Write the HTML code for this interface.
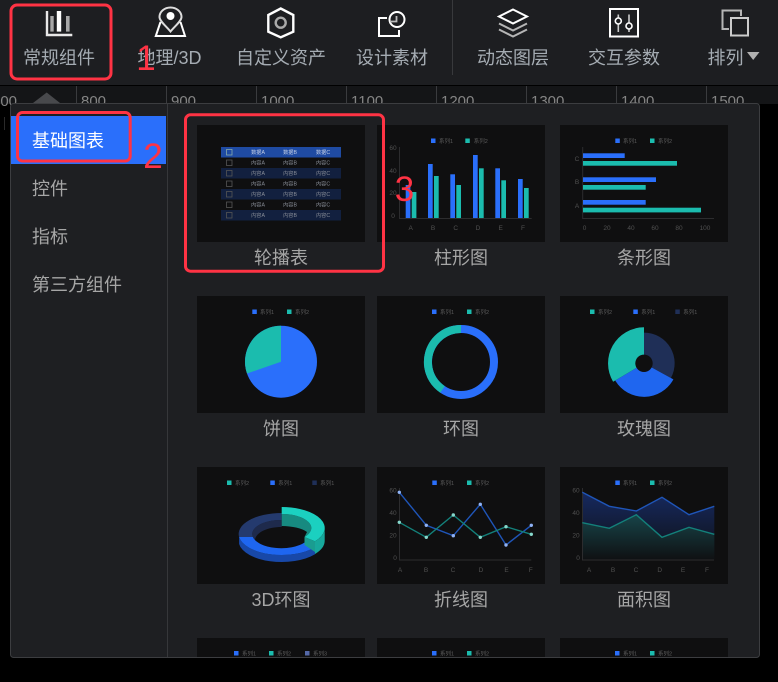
<!DOCTYPE html>
<html lang="zh"><head><meta charset="utf-8"><title>组件面板</title>
<style>
html,body{margin:0;padding:0;background:#000;width:778px;height:682px;overflow:hidden}
svg{display:block;position:absolute;left:0;top:0}
text{font-family:"Liberation Sans","Noto Sans CJK SC",sans-serif}
.t{font-size:18px;fill:#a5acb3;text-anchor:middle}
.l{font-size:18px;fill:#a6a6a6;text-anchor:middle}
.m{font-size:18px;fill:#a6a6a6}
.r{font-size:15px;fill:#858585}
.g{font-size:5.5px;fill:#5c5c5c}
.a{font-size:6.5px;fill:#505050;text-anchor:middle}
.c{font-size:5.2px;fill:#8a8f99;text-anchor:middle}
.n{font-size:35px;fill:#ff3344;text-anchor:middle}
.ln{fill:none;stroke:#fff;stroke-width:2}
.gr{fill:none;stroke:#b5b5b5;stroke-width:2}
.cb{fill:none;stroke:#555;stroke-width:.8}
</style></head><body>
<svg width="778" height="682" viewBox="0 0 778 682">
<defs>
<linearGradient id="ab" x1="0" y1="0" x2="0" y2="1"><stop offset="0" stop-color="#16295f"/><stop offset="1" stop-color="#0f1012"/></linearGradient>
<linearGradient id="at" x1="0" y1="0" x2="0" y2="1"><stop offset="0" stop-color="#174449"/><stop offset="1" stop-color="#0f1012"/></linearGradient>
</defs>
<rect width="778" height="682" fill="#000"/>
<rect width="778" height="85" fill="#1d1e21"/>
<rect x="452" y="0" width="1" height="75" fill="#38393c"/>
<rect y="86" width="778" height="18" fill="#141517"/>
<g fill="#3a3b3e"><rect x="76" y="86" width="1" height="18"/><rect x="166" y="86" width="1" height="18"/><rect x="256" y="86" width="1" height="18"/><rect x="346" y="86" width="1" height="18"/><rect x="436" y="86" width="1" height="18"/><rect x="526" y="86" width="1" height="18"/><rect x="616" y="86" width="1" height="18"/><rect x="706" y="86" width="1" height="18"/></g>
<text class="r" x="-8" y="106">700</text><text class="r" x="81" y="106">800</text><text class="r" x="171" y="106">900</text><text class="r" x="261" y="106">1000</text><text class="r" x="351" y="106">1100</text><text class="r" x="441" y="106">1200</text><text class="r" x="531" y="106">1300</text><text class="r" x="621" y="106">1400</text><text class="r" x="711" y="106">1500</text>
<polygon points="33,103 46.7,92.5 60,103" fill="#48494c"/>
<rect x="4" y="117" width="1" height="13" fill="#2a2a2a"/>
<rect x="10.5" y="103.5" width="749" height="554" rx="3" fill="#1e1f22" stroke="#3c3d40"/>
<rect x="167" y="104" width="1" height="553" fill="#36373a"/>
<rect x="11" y="116" width="155" height="48" fill="#2a6ffb"/>
<text class="m" x="32" y="147" style="fill:#fff">基础图表</text>
<text class="m" x="32" y="195">控件</text>
<text class="m" x="32" y="243">指标</text>
<text class="m" x="32" y="291">第三方组件</text>

<!-- toolbar icons -->
<path d="M47 11V35H72.3" fill="none" stroke="#e8e8e8" stroke-width="2.4"/>
<rect x="50.3" y="16" width="3.4" height="15.6" fill="#a8a8a8"/><rect x="56.8" y="11" width="4.4" height="20.6" fill="#fff"/><rect x="66" y="16" width="3.6" height="15.6" fill="#a8a8a8"/>
<path d="M170.5 31.5C166 26 159.500 21 159.500 17A11 9.500 0 0 1 181.500 17C181.500 21 175 26 170.500 31.500Z" fill="none" stroke="#ddd" stroke-width="2"/>
<path class="ln" d="M160.500 22L155.800 36H185L180.500 22"/>
<circle cx="170.500" cy="16" r="4" fill="#fff"/>
<path d="M280.700 8.500L293.300 15V31.700L280.700 37.300L268.300 31.700V15Z" fill="none" stroke="#fff" stroke-width="2.400"/>
<circle cx="280.700" cy="22.700" r="5" fill="none" stroke="#aaa" stroke-width="2.400"/>
<path class="ln" d="M387 18H379V36H399V30"/>
<circle cx="397" cy="19.500" r="7.500" class="ln"/>
<path d="M390 21.500H396.500V16" fill="none" stroke="#bbb" stroke-width="1.800"/>
<path class="ln" d="M513 9.500L527 16.500L513 23.500L499 16.500Z"/>
<path class="gr" d="M499 23.500L513 30.500L527 23.500"/>
<path class="gr" d="M499 29.500L513 36.500L527 29.500"/>
<rect x="610" y="9" width="28" height="27.500" class="ln"/>
<path d="M618.300 14.500V32M629 14.500V32" stroke="#ccc" stroke-width="1.600"/>
<circle cx="618.300" cy="21" r="3" fill="#1d1e21" stroke="#fff" stroke-width="1.600"/>
<circle cx="629" cy="26" r="3" fill="#1d1e21" stroke="#fff" stroke-width="1.600"/>
<path class="gr" d="M741 16V10.500H722.500V29H729"/>
<rect x="731" y="18" width="17" height="17.500" class="ln" style="stroke:#ccc"/>
<polygon points="747,52 759.500,52 753.200,60" fill="#b0b0b0"/>

<text class="t" x="59" y="64">常规组件</text>
<text class="t" x="169.500" y="64">地理/3D</text>
<text class="t" x="281" y="64">自定义资产</text>
<text class="t" x="392" y="64">设计素材</text>
<text class="t" x="513" y="64">动态图层</text>
<text class="t" x="624" y="64">交互参数</text>
<text class="t" x="725.500" y="64">排列</text>

<!-- thumbs -->
<g fill="#0f0f10">
<rect x="197" y="125" width="168" height="117"/><rect x="377" y="125" width="168" height="117"/><rect x="560" y="125" width="168" height="117"/>
<rect x="197" y="296" width="168" height="117"/><rect x="377" y="296" width="168" height="117"/><rect x="560" y="296" width="168" height="117"/>
<rect x="197" y="467" width="168" height="117"/><rect x="377" y="467" width="168" height="117"/><rect x="560" y="467" width="168" height="117"/>
<rect x="197" y="638" width="168" height="19"/><rect x="377" y="638" width="168" height="19"/><rect x="560" y="638" width="168" height="19"/>
</g>
<text class="l" x="281" y="264">轮播表</text><text class="l" x="461" y="264">柱形图</text><text class="l" x="644" y="264">条形图</text>
<text class="l" x="281" y="435">饼图</text><text class="l" x="461" y="435">环图</text><text class="l" x="644" y="435">玫瑰图</text>
<text class="l" x="281" y="606">3D环图</text><text class="l" x="461" y="606">折线图</text><text class="l" x="644" y="606">面积图</text>

<!-- table -->
<rect x="221" y="147" width="120" height="10.500" fill="#1f4ba3"/>
<g fill="#12203f"><rect x="221" y="168" width="120" height="10.500"/><rect x="221" y="189" width="120" height="10.500"/><rect x="221" y="210" width="120" height="10.500"/></g>
<rect x="226.500" y="149.500" width="5.500" height="5.500" class="cb" style="stroke:#8aa"/><rect x="226.500" y="160" width="5.500" height="5.500" class="cb"/><rect x="226.500" y="170.500" width="5.500" height="5.500" class="cb"/><rect x="226.500" y="181" width="5.500" height="5.500" class="cb"/><rect x="226.500" y="191.500" width="5.500" height="5.500" class="cb"/><rect x="226.500" y="202" width="5.500" height="5.500" class="cb"/><rect x="226.500" y="212.500" width="5.500" height="5.500" class="cb"/>
<text class="c" x="258" y="154" style="fill:#c4cfe6">数据A</text><text class="c" x="290" y="154" style="fill:#c4cfe6">数据B</text><text class="c" x="323" y="154" style="fill:#c4cfe6">数据C</text>
<text class="c" x="258" y="164.500">内容A</text><text class="c" x="290" y="164.500">内容B</text><text class="c" x="323" y="164.500">内容C</text>
<text class="c" x="258" y="175">内容A</text><text class="c" x="290" y="175">内容B</text><text class="c" x="323" y="175">内容C</text>
<text class="c" x="258" y="185.500">内容A</text><text class="c" x="290" y="185.500">内容B</text><text class="c" x="323" y="185.500">内容C</text>
<text class="c" x="258" y="196">内容A</text><text class="c" x="290" y="196">内容B</text><text class="c" x="323" y="196">内容C</text>
<text class="c" x="258" y="206.500">内容A</text><text class="c" x="290" y="206.500">内容B</text><text class="c" x="323" y="206.500">内容C</text>
<text class="c" x="258" y="217">内容A</text><text class="c" x="290" y="217">内容B</text><text class="c" x="323" y="217">内容C</text>

<!-- bar chart -->
<rect x="431" y="138.500" width="4.500" height="4.500" fill="#2a6ffb"/><text class="g" x="439" y="143">系列1</text>
<rect x="465.300" y="138.500" width="4.500" height="4.500" fill="#1bbcae"/><text class="g" x="473.700" y="143">系列2</text>
<path d="M399.500 147V218.500H531.700" fill="none" stroke="#2c2c2e"/>
<text class="a" x="393" y="150">60</text><text class="a" x="393" y="173">40</text><text class="a" x="393" y="195">20</text><text class="a" x="393" y="218">0</text>
<text class="a" x="410.700" y="230">A</text><text class="a" x="433" y="230">B</text><text class="a" x="455.700" y="230">C</text><text class="a" x="478" y="230">D</text><text class="a" x="500.700" y="230">E</text><text class="a" x="523" y="230">F</text>
<g fill="#2a6ffb"><rect x="405.700" y="185" width="4.700" height="33"/><rect x="428" y="164" width="4.700" height="54"/><rect x="450.300" y="174.300" width="4.700" height="43.700"/><rect x="473" y="155" width="4.700" height="63"/><rect x="495.300" y="168.300" width="4.700" height="49.700"/><rect x="518" y="179" width="4.700" height="39"/></g>
<g fill="#1bbcae"><rect x="411.700" y="192" width="4.700" height="26"/><rect x="434" y="176" width="4.700" height="42"/><rect x="456.300" y="185" width="4.700" height="33"/><rect x="479" y="168.300" width="4.700" height="49.700"/><rect x="501.300" y="180.300" width="4.700" height="37.700"/><rect x="524" y="188" width="4.700" height="30"/></g>

<!-- hbar -->
<rect x="615.300" y="138.500" width="4.500" height="4.500" fill="#2a6ffb"/><text class="g" x="623" y="143">系列1</text>
<rect x="650" y="138.500" width="4.500" height="4.500" fill="#1bbcae"/><text class="g" x="658" y="143">系列2</text>
<path d="M582.700 147V218.500H714" fill="none" stroke="#2c2c2e"/>
<text class="a" x="577" y="161">C</text><text class="a" x="577" y="184">B</text><text class="a" x="577" y="208">A</text>
<text class="a" x="584.600" y="230">0</text><text class="a" x="607" y="230">20</text><text class="a" x="631" y="230">40</text><text class="a" x="655" y="230">60</text><text class="a" x="679" y="230">80</text><text class="a" x="705" y="230">100</text>
<g fill="#2a6ffb"><rect x="583" y="153.300" width="41.700" height="4.700"/><rect x="583" y="177.300" width="73" height="4.700"/><rect x="583" y="200" width="62.700" height="4.700"/></g>
<g fill="#1bbcae"><rect x="583" y="161" width="94" height="4.700"/><rect x="583" y="185" width="62.700" height="4.700"/><rect x="583" y="207.700" width="118" height="4.700"/></g>

<!-- pie -->
<rect x="252.300" y="309.500" width="4.500" height="4.500" fill="#2a6ffb"/><text class="g" x="260" y="314">系列1</text>
<rect x="287" y="309.500" width="4.500" height="4.500" fill="#1bbcae"/><text class="g" x="295" y="314">系列2</text>
<circle cx="281" cy="361.700" r="36" fill="#2a6ffb"/>
<path d="M281 361.700V325.700A36 36 0 0 0 247 373.500Z" fill="#1bbcae"/>

<!-- donut -->
<rect x="432" y="309.500" width="4.500" height="4.500" fill="#2a6ffb"/><text class="g" x="440" y="314">系列1</text>
<rect x="467" y="309.500" width="4.500" height="4.500" fill="#1bbcae"/><text class="g" x="475" y="314">系列2</text>
<circle cx="461" cy="362" r="33" fill="none" stroke="#2a6ffb" stroke-width="8"/>
<path d="M461 329A33 33 0 0 0 442.500 389.400" fill="none" stroke="#1bbcae" stroke-width="8"/>

<!-- rose -->
<rect x="590" y="309.500" width="4.500" height="4.500" fill="#1bbcae"/><text class="g" x="598" y="314">系列2</text>
<rect x="633.300" y="309.500" width="4.500" height="4.500" fill="#2a6ffb"/><text class="g" x="641.300" y="314">系列1</text>
<rect x="675.300" y="309.500" width="4.500" height="4.500" fill="#1f2f57"/><text class="g" x="683.300" y="314">系列1</text>
<path d="M644 363.300V332.600A30.700 30.700 0 0 1 670.900 378Z" fill="#1f2f57"/>
<path d="M644 363.300L615.200 380.500A33.500 33.500 0 0 0 673.400 379.400Z" fill="#1f66ef"/>
<path d="M644 363.300V327.300A36 36 0 0 0 613.100 381.700Z" fill="#1bbcae"/>
<circle cx="644" cy="363.300" r="8.700" fill="#0f0f10"/>

<!-- 3d ring -->
<rect x="227" y="480.500" width="4.500" height="4.500" fill="#1bbcae"/><text class="g" x="235" y="485">系列2</text>
<rect x="270.300" y="480.500" width="4.500" height="4.500" fill="#2a6ffb"/><text class="g" x="278.300" y="485">系列1</text>
<rect x="312.300" y="480.500" width="4.500" height="4.500" fill="#1f2f57"/><text class="g" x="320.300" y="485">系列1</text>
<path d="M252.900 537A29 14 0 0 1 281.700 520V527C268 527 256 532 255 540Z" fill="#1e2a4c"/>
<path d="M281.700 513A43 21 0 0 0 239.100 537L252.900 537A29 14 0 0 1 281.700 520Z" fill="#243a6e"/>
<path d="M239.100 537V544A43 21 0 0 0 315 554.300V547.300A43 21 0 0 1 239.100 537Z" fill="#1848a8"/>
<path d="M239.100 537A43 21 0 0 0 315 547.300L305 542.300A29 14 0 0 1 252.900 537Z" fill="#1e66f0"/>
<path d="M281.700 514A29 14 0 0 1 304.500 537L307 532A29 11 0 0 0 281.700 526Z" fill="#178a80"/>
<path d="M304.500 537L315 541.300V552L304.500 545Z" fill="#1a9c90"/>
<path d="M324.700 528V541A43 21 0 0 1 315 554V541.300A43 21 0 0 0 324.700 528Z" fill="#17a89c"/>
<path d="M281.700 507A43 21 0 0 1 315 541.300L304.500 537A29 14 0 0 0 281.700 514Z" fill="#1bd0c0"/>

<!-- line -->
<rect x="432.300" y="480.500" width="4.500" height="4.500" fill="#2a6ffb"/><text class="g" x="440" y="485">系列1</text>
<rect x="467" y="480.500" width="4.500" height="4.500" fill="#1bbcae"/><text class="g" x="475" y="485">系列2</text>
<path d="M399.500 488V560H531.300" fill="none" stroke="#2c2c2e"/>
<text class="a" x="393" y="492.500">60</text><text class="a" x="393" y="515">40</text><text class="a" x="393" y="537.500">20</text><text class="a" x="395" y="560">0</text>
<text class="a" x="400" y="572">A</text><text class="a" x="426" y="572">B</text><text class="a" x="453" y="572">C</text><text class="a" x="481" y="572">D</text><text class="a" x="506.500" y="572">E</text><text class="a" x="530.700" y="572">F</text>
<polyline points="399.300,492.300 426.300,525.300 453.300,535.700 480.300,504.300 506,545 531.300,525.300" fill="none" stroke="#1f55b8" stroke-width="1.400"/>
<polyline points="399.300,522.300 426.300,537.300 453.300,515 480.300,537.300 506,526.700 531.300,534.300" fill="none" stroke="#13807a" stroke-width="1.400"/>
<g fill="#8fb2f5"><circle cx="399.300" cy="492.300" r="1.700"/><circle cx="426.300" cy="525.300" r="1.700"/><circle cx="453.300" cy="535.700" r="1.700"/><circle cx="480.300" cy="504.300" r="1.700"/><circle cx="506" cy="545" r="1.700"/><circle cx="531.300" cy="525.300" r="1.700"/></g>
<g fill="#86d8cc"><circle cx="399.300" cy="522.300" r="1.700"/><circle cx="426.300" cy="537.300" r="1.700"/><circle cx="453.300" cy="515" r="1.700"/><circle cx="480.300" cy="537.300" r="1.700"/><circle cx="506" cy="526.700" r="1.700"/><circle cx="531.300" cy="534.300" r="1.700"/></g>

<!-- area -->
<rect x="615.300" y="480.500" width="4.500" height="4.500" fill="#2a6ffb"/><text class="g" x="623" y="485">系列1</text>
<rect x="650" y="480.500" width="4.500" height="4.500" fill="#1bbcae"/><text class="g" x="658" y="485">系列2</text>
<polygon points="582.300,492.300 609.300,506.300 636.300,511 662,497.300 689,514.700 714.300,506.300 714.300,560 582.300,560" fill="url(#ab)"/>
<polygon points="582.300,522.700 609.300,528.300 636.300,514.700 662,537.300 689,527.300 714.300,534.300 714.300,560 582.300,560" fill="url(#at)"/>
<path d="M582.500 488V560H714" fill="none" stroke="#2c2c2e"/>
<polyline points="582.300,492.300 609.300,506.300 636.300,511 662,497.300 689,514.700 714.300,506.300" fill="none" stroke="#1f55b8" stroke-width="1.400"/>
<polyline points="582.300,522.700 609.300,528.300 636.300,514.700 662,537.300 689,527.300 714.300,534.300" fill="none" stroke="#13807a" stroke-width="1.400"/>
<text class="a" x="576" y="492.500">60</text><text class="a" x="576" y="515">40</text><text class="a" x="576" y="537.500">20</text><text class="a" x="578" y="560">0</text>
<text class="a" x="589" y="572">A</text><text class="a" x="613" y="572">B</text><text class="a" x="636" y="572">C</text><text class="a" x="659.700" y="572">D</text><text class="a" x="683" y="572">E</text><text class="a" x="707" y="572">F</text>

<!-- bottom row legends -->
<rect x="234" y="651" width="4.500" height="4.500" fill="#2a6ffb"/><text class="g" x="242" y="655.500">系列1</text>
<rect x="269" y="651" width="4.500" height="4.500" fill="#1bbcae"/><text class="g" x="277" y="655.500">系列2</text>
<rect x="305" y="651" width="4.500" height="4.500" fill="#5468a8"/><text class="g" x="313" y="655.500">系列3</text>
<rect x="432" y="651" width="4.500" height="4.500" fill="#2a6ffb"/><text class="g" x="440" y="655.500">系列1</text>
<rect x="467" y="651" width="4.500" height="4.500" fill="#1bbcae"/><text class="g" x="475" y="655.500">系列2</text>
<rect x="615" y="651" width="4.500" height="4.500" fill="#2a6ffb"/><text class="g" x="623" y="655.500">系列1</text>
<rect x="650" y="651" width="4.500" height="4.500" fill="#1bbcae"/><text class="g" x="658" y="655.500">系列2</text>

<!-- annotations -->
<g fill="none" stroke="#ff3344" stroke-width="3">
<rect x="11" y="5" width="100" height="74" rx="6"/>
<rect x="17.500" y="112.500" width="112.700" height="48.500" rx="5"/>
<rect x="185.500" y="114.800" width="198" height="156.400" rx="5"/>
</g>
<text class="n" x="146" y="70">1</text>
<text class="n" x="153" y="168">2</text>
<text class="n" x="404.500" y="201">3</text>
</svg>
</body></html>
